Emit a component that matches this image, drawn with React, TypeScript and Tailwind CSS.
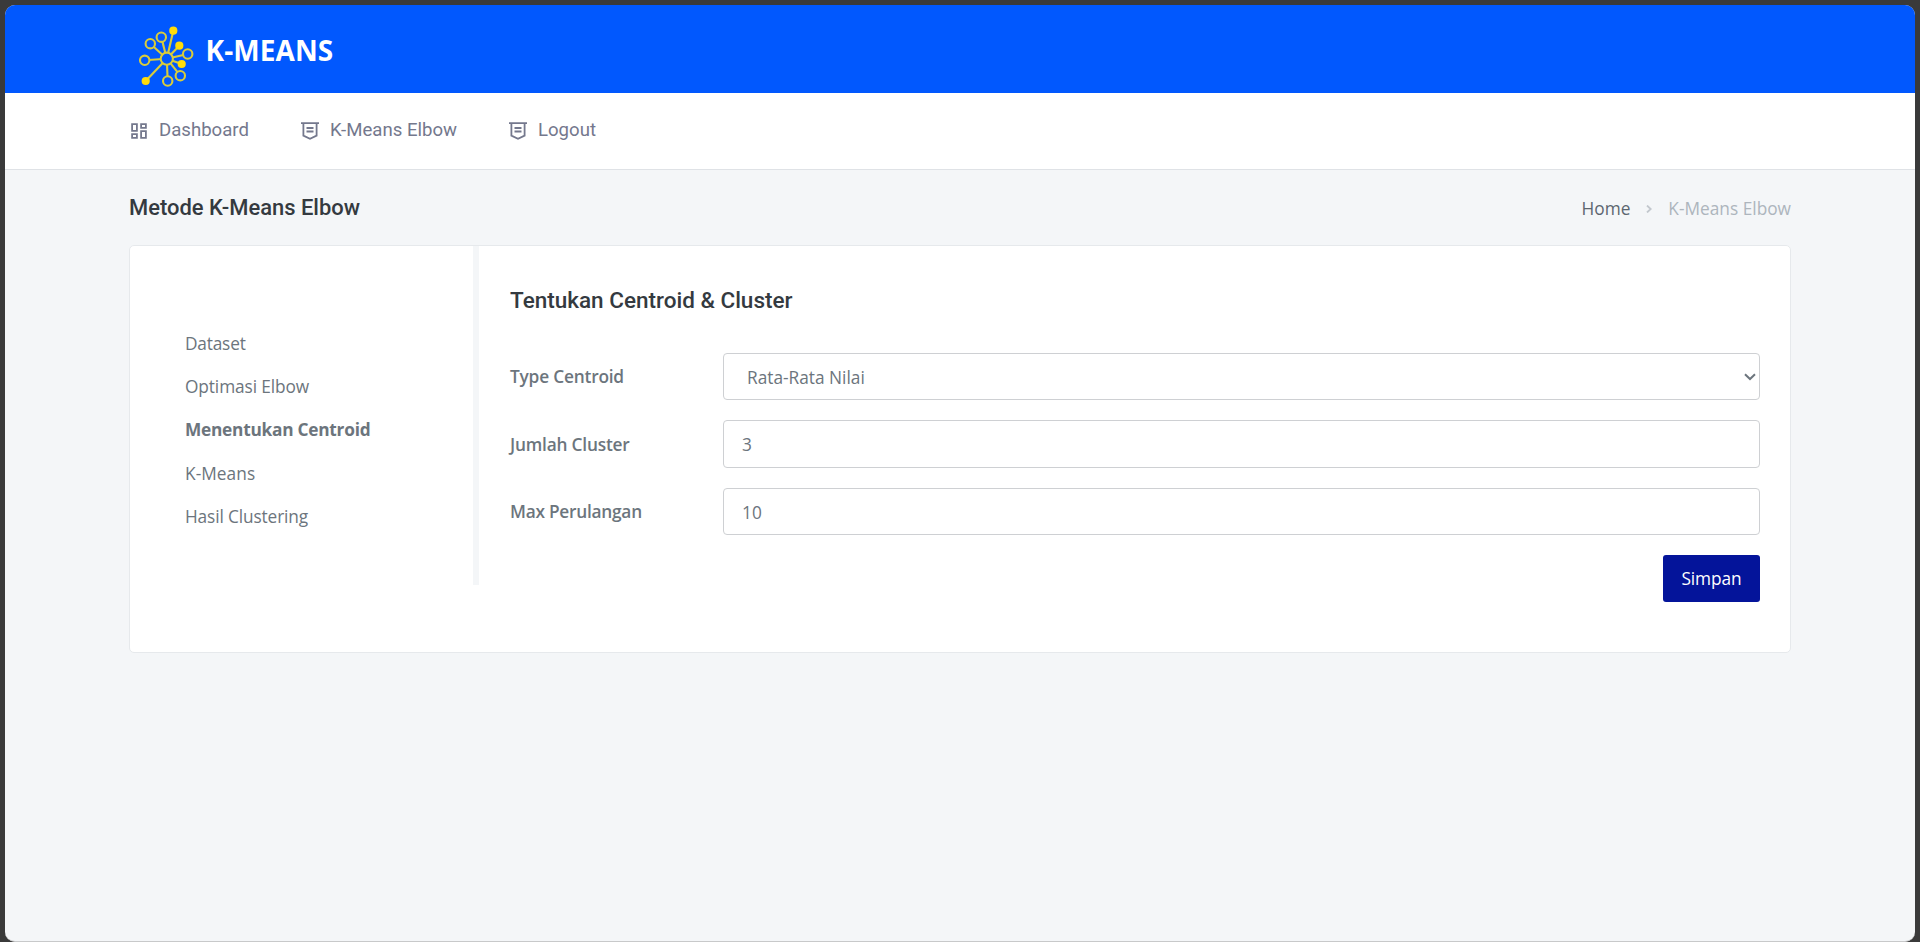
import React from "react";

const sidebar = [
  { label: "Dataset", cls: "tracking-[-0.2px]" },
  { label: "Optimasi Elbow", cls: "tracking-[-0.1px]" },
  { label: "Menentukan Centroid", cls: "font-bold tracking-[-0.25px]" },
  { label: "K-Means", cls: "tracking-[0.05px]" },
  { label: "Hasil Clustering", cls: "tracking-[-0.13px]" },
];

function Logo() {
  const open = [[22.3, 13.2], [11.3, 19.7], [5.7, 36.3], [28.7, 57], [41.3, 51.7], [48.7, 30]];
  const solid = [[34.3, 6.7], [40.3, 21.7], [42.7, 40], [6.7, 57]];
  const c = [27.8, 34.7];
  return (
    <svg className="mt-[18.5px] h-[64px] w-[56px]" viewBox="0 0 56 64" fill="none" stroke="#d8cc3c" strokeWidth="2.1">
      {[...open, ...solid].map(([x, y], i) => (
        <line key={i} x1={c[0]} y1={c[1]} x2={x} y2={y} />
      ))}
      {open.map(([x, y], i) => (
        <circle key={i} cx={x} cy={y} r="4.7" fill="#0158fe" />
      ))}
      {solid.map(([x, y], i) => (
        <circle key={i} cx={x} cy={y} r="4.1" fill="#ffdc0a" stroke="none" />
      ))}
      <circle cx={c[0]} cy={c[1]} r="6.1" fill="#0158fe" />
    </svg>
  );
}

function GridIcon() {
  return (
    <svg className="h-[16px] w-[16px]" viewBox="0 0 16 16" fill="none" stroke="currentColor" strokeWidth="1.8">
      <path d="M1.1 1.1h4.8v6.8H1.1zM10.1 1.1h4.8v3.8h-4.8zM1.1 11.1h4.8v3.8H1.1zM10.1 8.1h4.8v6.8h-4.8z" />
    </svg>
  );
}

function BadgeIcon() {
  return (
    <svg className="h-[18px] w-[18px]" viewBox="0 0 18 18" fill="none" stroke="currentColor" strokeWidth="1.8">
      <path d="M0 1.2h18M2.4 1.2v12.4L9 16.8l6.6-3.2V1.2M5.5 6h7M5.5 9.5h7" />
    </svg>
  );
}

const field = "h-full w-full rounded-[4px] border border-[#ced0d3] bg-white";

export default function App() {
  return (
    <div className="h-[942px] w-[1920px] bg-[#3a3a3a] px-[5px] pt-[5px] font-['Open_Sans',sans-serif] text-[17.3px] text-[#6c757d]">
      <div className="flex h-[937px] flex-col overflow-hidden rounded-[10px] border-b border-[#c8c9ca] bg-[#f4f6f8]">
        <header className="flex h-[88px] shrink-0 bg-[#0158fe] pl-[133.5px]">
          <Logo />
          <div className="mt-[23px] ml-[11px] text-[28px] leading-[44px] font-bold tracking-[0.1px] text-white">K-MEANS</div>
        </header>
        <nav className="flex h-[77px] shrink-0 items-center border-b border-[#dfe2e6] bg-white pl-[126px] font-[Roboto,sans-serif] text-[18.6px] text-[#74788d]">
          <a className="flex w-[170px] items-center gap-[12px]"><GridIcon /><span>Dashboard</span></a>
          <a className="flex w-[208px] items-center gap-[11px]"><BadgeIcon /><span>K-Means Elbow</span></a>
          <a className="flex items-center gap-[11px]"><BadgeIcon /><span>Logout</span></a>
        </nav>
        <div className="flex h-[75px] shrink-0 items-center justify-between pt-[2px] pr-[124px] pl-[124px]">
          <h1 className="font-[Roboto,sans-serif] text-[21.95px] font-medium text-[#343a40]">Metode K-Means Elbow</h1>
          <div className="flex items-center">
            <span className="text-[#5c6670]">Home</span>
            <svg className="mr-[16px] ml-[16px] h-[8px] w-[6px]" viewBox="0 0 6 8" fill="none" stroke="#c3c8ce" strokeWidth="1.8"><path d="M1 .5 4.7 4 1 7.5" /></svg>
            <span className="text-[#adb5bd]">K-Means Elbow</span>
          </div>
        </div>
        <main className="ml-[124px] flex h-[408px] w-[1662px] shrink-0 rounded-[5px] border border-[#e6e9ec] bg-white">
          <aside className="h-[339px] w-[349px] border-r-[6px] border-[#f4f6f8] pt-[76px] pl-[55px]">
            {sidebar.map((s) => (
              <div key={s.label} className={`h-[43.2px] leading-[43.2px] ${s.cls}`}>{s.label}</div>
            ))}
          </aside>
          <section className="w-[1282px] pt-[40px] pl-[31px]">
            <h2 className="h-[67px] font-[Roboto,sans-serif] text-[22.5px] leading-[28px] font-medium text-[#343a40]">Tentukan Centroid &amp; Cluster</h2>
            <div className="flex w-[1250px] flex-col gap-[20px]">
              <div className="flex h-[47px] items-center">
                <label className="w-[213px] shrink-0 font-semibold tracking-[-0.2px]">Type Centroid</label>
                <div className={`${field} flex items-center justify-between pr-[3px] pl-[23px]`}>
                  <span className="pt-[2px]">Rata-Rata Nilai</span>
                  <svg className="h-[8px] w-[12px]" viewBox="0 0 12 8" fill="none" stroke="#6c757d" strokeWidth="2"><path d="M1 1.2 6 6l5-4.8" /></svg>
                </div>
              </div>
              <div className="flex h-[48px] items-center">
                <label className="w-[213px] shrink-0 pt-[1px] font-semibold tracking-[-0.2px]">Jumlah Cluster</label>
                <div className={`${field} flex items-center pt-[2px] pl-[18px]`}>3</div>
              </div>
              <div className="flex h-[47px] items-center">
                <label className="w-[213px] shrink-0 font-semibold tracking-[-0.25px]">Max Perulangan</label>
                <div className={`${field} flex items-center pt-[2px] pl-[18px]`}>10</div>
              </div>
              <button className="h-[47px] w-[97px] self-end rounded-[3px] bg-[#04149a] tracking-[-0.1px] text-white">Simpan</button>
            </div>
          </section>
        </main>
      </div>
    </div>
  );
}
